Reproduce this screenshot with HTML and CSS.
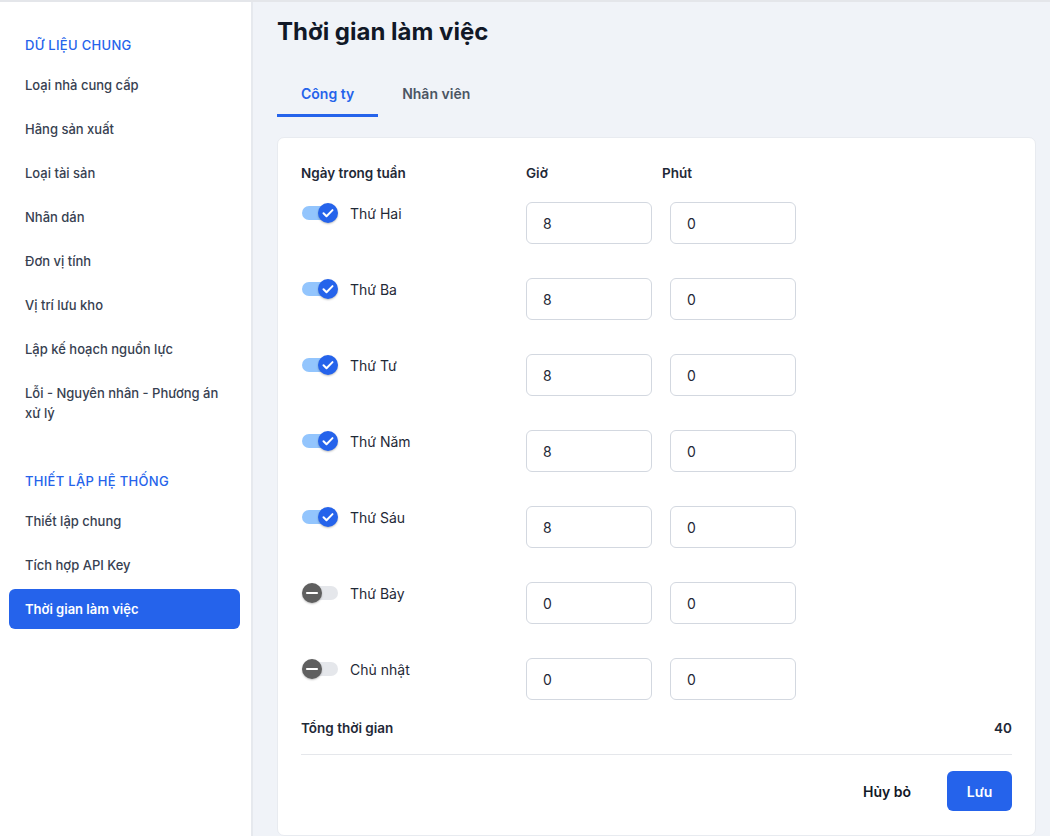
FILE: index.html
```html
<!DOCTYPE html>
<html lang="vi">
<head>
<meta charset="utf-8">
<title>Thời gian làm việc</title>
<link rel="stylesheet" href="styles.css">
</head>
<body>
<div class="app">
  <aside class="sidebar">
    <div class="side-heading">DỮ LIỆU CHUNG</div>
    <a class="side-item">Loại nhà cung cấp</a>
    <a class="side-item">Hãng sản xuất</a>
    <a class="side-item">Loại tài sản</a>
    <a class="side-item">Nhãn dán</a>
    <a class="side-item">Đơn vị tính</a>
    <a class="side-item">Vị trí lưu kho</a>
    <a class="side-item">Lập kế hoạch nguồn lực</a>
    <a class="side-item multi">Lỗi - Nguyên nhân - Phương án xử lý</a>
    <div class="side-heading second">THIẾT LẬP HỆ THỐNG</div>
    <a class="side-item">Thiết lập chung</a>
    <a class="side-item">Tích hợp API Key</a>
    <a class="side-item active">Thời gian làm việc</a>
  </aside>
  <main class="main">
    <h1 class="title">Thời gian làm việc</h1>
    <nav class="tabs">
      <a class="tab active">Công ty</a>
      <a class="tab">Nhân viên</a>
    </nav>
    <section class="card">
      <div class="grid-head">
        <span class="col-day">Ngày trong tuần</span>
        <span class="col-head">Giờ</span>
        <span class="col-head">Phút</span>
      </div>

      <div class="row">
        <div class="col-day day">
          <span class="toggle on"><span class="knob"><svg viewBox="0 0 20 20" width="20" height="20"><path d="M5.5 10.3l3 3 6-6.2" fill="none" stroke="#fff" stroke-width="2" stroke-linecap="round" stroke-linejoin="round"/></svg></span></span>
          <span class="day-name">Thứ Hai</span>
        </div>
        <div class="col-in"><input class="field" type="text" value="8"></div>
        <div class="col-in"><input class="field" type="text" value="0"></div>
      </div>

      <div class="row">
        <div class="col-day day">
          <span class="toggle on"><span class="knob"><svg viewBox="0 0 20 20" width="20" height="20"><path d="M5.5 10.3l3 3 6-6.2" fill="none" stroke="#fff" stroke-width="2" stroke-linecap="round" stroke-linejoin="round"/></svg></span></span>
          <span class="day-name">Thứ Ba</span>
        </div>
        <div class="col-in"><input class="field" type="text" value="8"></div>
        <div class="col-in"><input class="field" type="text" value="0"></div>
      </div>

      <div class="row">
        <div class="col-day day">
          <span class="toggle on"><span class="knob"><svg viewBox="0 0 20 20" width="20" height="20"><path d="M5.5 10.3l3 3 6-6.2" fill="none" stroke="#fff" stroke-width="2" stroke-linecap="round" stroke-linejoin="round"/></svg></span></span>
          <span class="day-name">Thứ Tư</span>
        </div>
        <div class="col-in"><input class="field" type="text" value="8"></div>
        <div class="col-in"><input class="field" type="text" value="0"></div>
      </div>

      <div class="row">
        <div class="col-day day">
          <span class="toggle on"><span class="knob"><svg viewBox="0 0 20 20" width="20" height="20"><path d="M5.5 10.3l3 3 6-6.2" fill="none" stroke="#fff" stroke-width="2" stroke-linecap="round" stroke-linejoin="round"/></svg></span></span>
          <span class="day-name">Thứ Năm</span>
        </div>
        <div class="col-in"><input class="field" type="text" value="8"></div>
        <div class="col-in"><input class="field" type="text" value="0"></div>
      </div>

      <div class="row">
        <div class="col-day day">
          <span class="toggle on"><span class="knob"><svg viewBox="0 0 20 20" width="20" height="20"><path d="M5.5 10.3l3 3 6-6.2" fill="none" stroke="#fff" stroke-width="2" stroke-linecap="round" stroke-linejoin="round"/></svg></span></span>
          <span class="day-name">Thứ Sáu</span>
        </div>
        <div class="col-in"><input class="field" type="text" value="8"></div>
        <div class="col-in"><input class="field" type="text" value="0"></div>
      </div>

      <div class="row">
        <div class="col-day day">
          <span class="toggle off"><span class="knob"><svg viewBox="0 0 20 20" width="20" height="20"><path d="M5 10h10" fill="none" stroke="#fff" stroke-width="2.2" stroke-linecap="round"/></svg></span></span>
          <span class="day-name">Thứ Bảy</span>
        </div>
        <div class="col-in"><input class="field" type="text" value="0"></div>
        <div class="col-in"><input class="field" type="text" value="0"></div>
      </div>

      <div class="row">
        <div class="col-day day">
          <span class="toggle off"><span class="knob"><svg viewBox="0 0 20 20" width="20" height="20"><path d="M5 10h10" fill="none" stroke="#fff" stroke-width="2.2" stroke-linecap="round"/></svg></span></span>
          <span class="day-name">Chủ nhật</span>
        </div>
        <div class="col-in"><input class="field" type="text" value="0"></div>
        <div class="col-in"><input class="field" type="text" value="0"></div>
      </div>

      <div class="total">
        <span>Tổng thời gian</span>
        <span>40</span>
      </div>
      <div class="actions">
        <button class="btn btn-ghost" type="button">Hủy bỏ</button>
        <button class="btn btn-primary" type="button">Lưu</button>
      </div>
    </section>
  </main>
</div>
</body>
</html>
```
FILE: styles.css
```css
* { box-sizing: border-box; }
html, body { margin: 0; padding: 0; }
body {
  font-family: Inter, "Noto Sans", "Liberation Sans", sans-serif;
  color: #1f2937;
  background: #f0f3f8;
  border-top: 2px solid #e4e6ea;
}
.app {
  display: flex;
  height: 834px;
  overflow: hidden;
}
.sidebar {
  width: 253px;
  flex: none;
  background: #fff;
  border-right: 2px solid #e6e9ee;
  padding: 23px 11px 0 9px;
  display: flex;
  flex-direction: column;
}
.side-heading {
  height: 40px;
  display: flex;
  align-items: center;
  padding-left: 16px;
  font-size: 13px;
  font-weight: 500;
  letter-spacing: 0.3px;
  color: #2563eb;
}
.side-heading.second { margin-top: 24px; }
.side-item {
  min-height: 40px;
  display: flex;
  align-items: center;
  padding: 10px 16px;
  margin-bottom: 4px;
  font-size: 13px;
  font-weight: 500;
  line-height: 20px;
  color: #374151;
  border-radius: 6px;
}
.side-item.active {
  background: #2563eb;
  color: #fff;
  font-weight: 600;
}
.main {
  flex: 1;
  padding: 0 14px 0 24px;
  display: flex;
  flex-direction: column;
}
.title {
  margin: 0;
  height: 58px;
  display: flex;
  align-items: center;
  font-size: 24px;
  font-weight: 700;
  color: #111827;
}
.tabs {
  display: flex;
  margin-top: 12px;
  height: 45px;
}
.tab {
  padding: 0 24px;
  height: 45px;
  display: flex;
  align-items: center;
  font-size: 14px;
  font-weight: 600;
  color: #4b5563;
  border-bottom: 3px solid transparent;
}
.tab.active {
  color: #2563eb;
  border-bottom-color: #2563eb;
}
.card {
  margin-top: 20px;
  flex: 1;
  background: #fff;
  border-radius: 7px;
  border: 1px solid #e8ebf0;
  padding: 25px 23px 22px 23px;
  display: flex;
  flex-direction: column;
}
.grid-head {
  display: flex;
  height: 20px;
  align-items: center;
  font-size: 13.5px;
  font-weight: 600;
  color: #1f2937;
}
.grid-head .col-day { margin-right: 18px; }
.col-head { width: 136px; flex: none; }
.col-day { width: 207px; flex: none; }
.col-in { width: 126px; flex: none; }
.row {
  display: flex;
  gap: 18px;
  margin-top: 19px;
}
.row + .row { margin-top: 34px; }
.day {
  display: flex;
  align-items: center;
  gap: 12px;
  height: 22px;
  padding-left: 1px;
}
.day-name {
  font-size: 14px;
  color: #1f2937;
}
.toggle {
  position: relative;
  width: 36px;
  height: 20px;
  flex: none;
  display: block;
}
.toggle::before {
  content: "";
  position: absolute;
  left: 0;
  top: 3px;
  width: 34px;
  height: 14px;
  border-radius: 7px;
  background: #93c5fd;
}
.toggle.off::before { background: #e5e7eb; left: 2px; }
.knob {
  position: absolute;
  top: 0;
  width: 20px;
  height: 20px;
  border-radius: 50%;
  display: flex;
  align-items: center;
  justify-content: center;
  box-shadow: 0 1px 2px rgba(0,0,0,0.25);
}
.toggle.on .knob { right: 0; background: #2563eb; }
.toggle.off .knob { left: 0; background: #5f5f5f; }
.field {
  width: 126px;
  height: 42px;
  border: 1px solid #d3d8e0;
  border-radius: 6px;
  padding: 0 16px;
  font-family: inherit;
  font-size: 14px;
  color: #1f2937;
  background: #fff;
  outline: none;
}
.total {
  display: flex;
  justify-content: space-between;
  align-items: center;
  height: 20px;
  margin-top: 18px;
  font-size: 13.5px;
  font-weight: 600;
  color: #1f2937;
}
.actions {
  margin-top: 16px;
  border-top: 1px solid #e5e7eb;
  padding-top: 16px;
  display: flex;
  justify-content: flex-end;
  gap: 20px;
}
.btn {
  height: 40px;
  border: none;
  border-radius: 6px;
  font-family: inherit;
  font-size: 14px;
  font-weight: 600;
  cursor: pointer;
}
.btn-ghost {
  background: transparent;
  color: #111827;
  padding: 0 16px;
}
.btn-primary {
  background: #2563eb;
  color: #fff;
  width: 65px;
}
```
